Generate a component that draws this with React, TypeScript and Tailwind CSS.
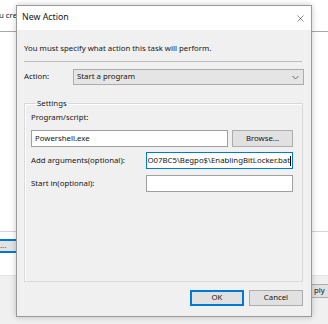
import { X } from 'lucide-react'

function Chevron() {
  return (
    <svg width="7" height="5" viewBox="0 0 7 5" className="shrink-0">
      <polyline points="0.5,1 3.5,4 6.5,1" fill="none" stroke="#5a5a5a" strokeWidth="0.9" />
    </svg>
  )
}

function Button({ label, focused }: { label: string; focused?: boolean }) {
  return (
    <div
      className={`w-[54px] h-[16px] flex items-center justify-center bg-[#e1e1e1] border ${
        focused ? 'border-[#0078d7] shadow-[inset_0_0_0_1px_#0078d7]' : 'border-[#adadad]'
      }`}
    >
      {label}
    </div>
  )
}

export default function App() {
  return (
    <div className="relative w-[328px] h-[324px] overflow-hidden bg-white font-['Noto_Sans',sans-serif] text-[7.8px] text-[#161616]">
      {/* Task Scheduler window behind the dialog */}
      <div className="flex flex-col h-full">
        <div className="h-[31px] w-[16px] flex items-center whitespace-nowrap overflow-hidden">
          <span className="-ml-px">u cre</span>
        </div>
        <div className="h-px bg-[#a8a8a8]" />
        <div className="h-[199px]" />
        <div className="h-px bg-[#d4d4d4]" />
        <div className="h-[7px]" />
        <div className="w-[40px] h-[14px] border-y-2 border-[#0078d7] bg-[#e3e3e3] flex items-center leading-none text-[#555]">
          ...
        </div>
        <div className="flex-1" />
        <div className="h-[49px] bg-[#f0f0f0] border-t border-[#e4e4e4] flex pt-[8px] pl-[311px]">
          <div className="shrink-0 w-[17px] h-[14px] bg-[#e1e1e1] border-y border-[#adadad] flex items-center overflow-hidden pl-[3px]">
            ply
          </div>
        </div>
      </div>

      {/* New Action dialog */}
      <div className="absolute left-[16px] top-[5px] w-[296px] h-[312px] border border-[#9a9a9a] bg-[#f0f0f0] shadow-[0_0_6px_rgba(0,0,0,0.22)] flex flex-col">
        <div className="h-[24px] bg-white flex items-center justify-between pl-[5px] pr-[5px] text-[8.8px]">
          <span>New Action</span>
          <X size={11} strokeWidth={1.2} className="text-[#333]" />
        </div>

        <div className="flex flex-col px-[7px]">
          <p className="mt-[12px] leading-[12px]">You must specify what action this task will perform.</p>
          <div className="mt-[7px] mr-[2px] h-px bg-[#bdbdbd]" />

          <div className="mt-[7px] h-[16px] flex items-center">
            <span className="w-[49px] shrink-0">Action:</span>
            <div className="flex-1 h-full bg-[#e5e5e5] border border-[#acacac] flex items-center justify-between pl-[3px] pr-[4px]">
              <span>Start a program</span>
              <Chevron />
            </div>
          </div>

          <fieldset className="mt-[13px] mr-[1px] h-[184px] min-w-0 border border-[#d9d9d9] shadow-[inset_1px_1px_0_#ffffff] pl-[6px] pr-[9px]">
            <legend className="ml-[5px] px-[1px] leading-[10px]">Settings</legend>
            <div className="mt-[4px] leading-[10px]">Program/script:</div>
            <div className="mt-[8px] h-[17px] flex gap-[4px]">
              <div className="flex-1 bg-white border border-[#a0a0a0] flex items-center pl-[3px]">Powershell.exe</div>
              <div className="w-[61px] bg-[#e1e1e1] border border-[#adadad] flex items-center justify-center">
                Browse...
              </div>
            </div>
            <div className="mt-[5px] h-[17px] flex items-center">
              <span className="w-[115px] shrink-0">Add arguments(optional):</span>
              <div className="flex-1 h-full min-w-0 bg-white border border-[#0078d7] flex items-center justify-end overflow-hidden whitespace-nowrap pr-[1px]">
                <span>O07BC5\Begpo$\EnablingBitLocker.bat</span>
                <span className="w-px h-[10px] bg-black shrink-0" />
              </div>
            </div>
            <div className="mt-[6px] h-[17px] flex items-center">
              <span className="w-[115px] shrink-0">Start in(optional):</span>
              <div className="flex-1 h-full bg-white border border-[#a0a0a0]" />
            </div>
          </fieldset>

          <div className="mt-[8px] mr-[1px] flex justify-end gap-[5px]">
            <Button label="OK" focused />
            <Button label="Cancel" />
          </div>
        </div>
      </div>
    </div>
  )
}
